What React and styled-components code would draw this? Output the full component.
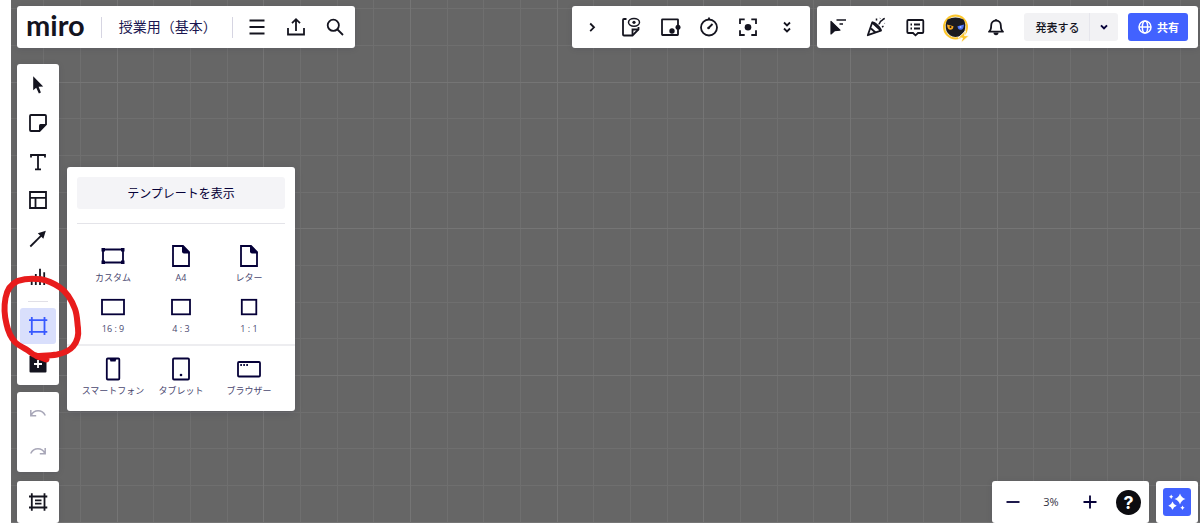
import React, { useState } from 'react'
import styled, { createGlobalStyle } from 'styled-components';

const GlobalStyle = createGlobalStyle`
  * {
    box-sizing: border-box;
  }
  body {
    margin: 0;
    background-color: #ffffff;
    font-family: "Open Sans", "Noto Sans CJK JP", sans-serif;
    color: #14141f;
  }
  button {
    font: inherit;
    color: inherit;
    border: none;
    padding: 0;
    background: none;
    cursor: pointer;
  }
`;

function Icon({ children, size = 24 }) {
  return (
    <IconSvg width={size} height={size} viewBox="0 0 24 24" aria-hidden="true">
      {children}
    </IconSvg>
  )
}

const icons = {
  menu: <path d="M4.500 5.500h15M4.500 12h15M4.500 18.500h15" />,
  upload: <path d="M4 13v6.500h16V13M12 16V4.500M8 8.200l4-4 4 4" />,
  search: <><circle cx="10.300" cy="10.300" r="5.600" /><path d="M14.500 14.500l5.500 5.500" /></>,
  next: <path d="M10.200 8.500l3.800 3.800-3.800 3.800" />,
  noteEye: (
    <>
      <path d="M7.500 4H5a1 1 0 0 0-1 1v14.500a1 1 0 0 0 1 1h8.500l6-6V12" />
      <path d="M13.500 20v-5.500h6" />
      <ellipse cx="15" cy="7.300" rx="5.500" ry="3.900" strokeWidth="1.500" />
      <circle cx="15" cy="7.300" r="1.600" fill="currentColor" stroke="none" />
    </>
  ),
  panelDots: (
    <>
      <rect x="4" y="4.300" width="16" height="15.700" rx=".5" />
      <circle cx="14" cy="16" r="2.700" fill="currentColor" stroke="none" />
      <circle cx="20" cy="12.300" r="2.500" fill="currentColor" stroke="none" />
    </>
  ),
  timer: (
    <>
      <circle cx="12" cy="12.500" r="8" />
      <path d="M12 4.500V2.500M11.500 13l4-4" />
      <circle cx="11.500" cy="13" r="1.300" fill="currentColor" stroke="none" />
    </>
  ),
  focus: (
    <>
      <path d="M4 9V4.300h4.700M15.300 4.300H20V9M20 15.300V20h-4.700M8.700 20H4v-4.700" />
      <circle cx="12" cy="12.200" r="3.300" fill="currentColor" stroke="none" />
    </>
  ),
  more: <path d="M9 7.500l3 3 3-3M9 13.500l3 3 3-3" />,
  cursorLines: (
    <>
      <path d="M6 6.500v12.500l3.500-3.300 5.500-.6z" fill="currentColor" strokeLinejoin="round" strokeWidth="1.200" />
      <path d="M11.500 5h9.500M14.500 9H18" strokeWidth="1.500" />
    </>
  ),
  party: (
    <>
      <path d="M3.800 20.200L8.200 7.500l8.700 8.200z" strokeLinejoin="round" />
      <path d="M8.200 7.500c2-.8 9 5.700 8.700 8.200M7 13.500l4.500 4" />
      <path d="M12.500 5.500V3.500M14.500 9c2 0 1-2.500 2.500-3s1.500-2 3.800-2.500M18 12l1.500-.8M16 3.500l.3-.3M20.500 8.300l.3.200" strokeWidth="1.500" />
    </>
  ),
  comments: (
    <>
      <path d="M5.300 5h14a1 1 0 0 1 1 1v11a1 1 0 0 1-1 1H15l-2.500 2.300L10 18H5.300a1 1 0 0 1-1-1V6a1 1 0 0 1 1-1z" />
      <path d="M7.500 9.500h1.500M11 9.500h6M7.500 13.500h1.500M11 13.500h6" strokeWidth="1.800" />
    </>
  ),
  bell: (
    <>
      <path d="M5 16.700c1.800-1.200 2.200-2.500 2.200-6.400a4.800 4.800 0 0 1 9.600 0c0 3.900.4 5.200 2.200 6.400z" strokeLinejoin="round" />
      <path d="M12 5.500V4.300" />
      <path d="M9.500 17.500a2.500 2.800 0 0 0 5 0z" fill="currentColor" stroke="none" />
    </>
  ),
  pointer: <path d="M7.200 3.200v14l3-2.500 2.700 5.800 2-1-2.300-5.700 4.600-.2z" fill="currentColor" stroke="none" />,
  sticky: (
    <>
      <path d="M13.500 20H5a1 1 0 0 1-1-1V5a1 1 0 0 1 1-1h14a1 1 0 0 1 1 1v8.500z" />
      <path d="M13 20.500V14.500a1.500 1.500 0 0 1 1.500-1.500h6z" fill="currentColor" stroke="none" />
    </>
  ),
  text: <path d="M5 7.500V5h14v2.500M12 5v14.500M9 19.300h6" />,
  template: <path d="M4 4h16v16H4zM4 9.800h16M9.500 9.800V20" />,
  arrow: (
    <>
      <path d="M4.300 19.500L15.500 8.300" />
      <path d="M19.800 3.800l-2.500 8-5.500-5.500z" fill="currentColor" stroke="none" />
    </>
  ),
  chart: <path d="M5.700 12.500V20M9.800 9v11M14 3.700V20M18.200 7.300V20" />,
  frame: <path d="M5.800 3v18M18.500 3v18M3 6.200h18.300M3 17.800h18.300" />,
  add: (
    <>
      <rect x="3.500" y="3.500" width="17" height="17" rx="1" fill="currentColor" stroke="none" />
      <path d="M12 8v8M8 12h8" stroke="#fff" />
    </>
  ),
  undo: <path d="M4.800 9v5.800h5.400M5.200 14.300C8 8.500 16 8.200 19.300 14.500" strokeWidth="1.500" />,
  redo: <path d="M19.200 9v5.800h-5.400M18.800 14.300C16 8.500 8 8.200 4.700 14.500" strokeWidth="1.500" />,
  frames: <path d="M5.800 3.300v17.400M18.500 3.300v17.400M3 6.500h18.300M3 17.500h18.300M9 10.300h6.500M9 13.700h6.500" />,
  minus: <path d="M5.500 12h13" />,
  plus: <path d="M5.500 12h13M12 5.500v13" />,
  custom: (
    <>
      <path d="M2 5.500h20v13H2z" />
      <path d="M.5 4h3.500v3.500H.5zM20 4h3.500v3.500H20zM.5 16.500h3.500V20H.5zM20 16.500h3.500V20H20z" fill="currentColor" stroke="none" />
    </>
  ),
  page: (
    <>
      <path d="M4 2h10l6 6v14H4z" />
      <path d="M13 2h1.500L20.500 8v1.500H15a2 2 0 0 1-2-2z" fill="currentColor" stroke="none" />
    </>
  ),
  wide: <rect x="1" y="4.800" width="22" height="14.500" />,
  standard: <rect x="3" y="4.800" width="18" height="14.500" />,
  square: <rect x="4.800" y="4.800" width="14.500" height="14.500" />,
  phone: <><rect x="5.800" y="1.500" width="12.500" height="21" rx="1" /><path d="M8.500 1.500h7l-1 3h-5z" fill="currentColor" stroke="none" /></>,
  tablet: <><rect x="4" y="1.500" width="16" height="21" rx="1" /><circle cx="12" cy="18" r="1.300" fill="currentColor" stroke="none" /></>,
  browser: <><rect x="1" y="5" width="22" height="14.500" rx="1" /><path d="M3.300 8h1.600M6.300 8h1.600M9.300 8h1.600" /></>,
};

const meetingTools = [
  { icon: "next", label: "折りたたむ" },
  { icon: "noteEye", label: "プライベートモード" },
  { icon: "panelDots", label: "アクティビティ" },
  { icon: "timer", label: "タイマー" },
  { icon: "focus", label: "フォーカス" },
  { icon: "more", label: "その他" },
];

const drawTools = [
  { icon: "pointer", label: "選択" },
  { icon: "sticky", label: "付箋" },
  { icon: "text", label: "テキスト" },
  { icon: "template", label: "テンプレート" },
  { icon: "arrow", label: "接続線" },
  { icon: "chart", label: "グラフ" },
];

const paperSizes = [
  { icon: "custom", label: "カスタム" },
  { icon: "page", label: "A4" },
  { icon: "page", label: "レター" },
  { icon: "wide", label: "16 : 9" },
  { icon: "standard", label: "4 : 3" },
  { icon: "square", label: "1 : 1" },
];

const deviceSizes = [
  { icon: "phone", label: "スマートフォン" },
  { icon: "tablet", label: "タブレット" },
  { icon: "browser", label: "ブラウザー" },
];

function SizeList({ sizes }) {
  return (
    <SizeGrid>
      {sizes.map((size) => (
        <SizeButton key={size.label} type="button">
          <Icon>{icons[size.icon]}</Icon>
          <span>{size.label}</span>
        </SizeButton>
      ))}
    </SizeGrid>
  )
}

function Avatar() {
  return (
    <svg width="30" height="32" viewBox="0 0 30 32" aria-hidden="true">
      <circle cx="15.500" cy="16" r="11.500" fill="#f6f2e6" stroke="#fcc62c" strokeWidth="2" />
      <path d="M7.500 8.500Q15.500 4.500 23.500 8.500Q26.500 13 24.500 20Q22 25.500 15.500 26Q9 25.500 6.500 20Q4.500 13 7.500 8.500z" fill="#1b1b20" />
      <path d="M7 13.500l6.500 1.800q-.3 3.500-3.200 3.500T7 13.500z" fill="#f8a81e" />
      <path d="M24 13.500l-6.500 1.800q.3 3.500 3.200 3.500T24 13.500z" fill="#4c74f5" />
      <circle cx="10.500" cy="16" r="1" fill="#1b1b20" />
      <circle cx="20.500" cy="16" r="1" fill="#a9c0ff" />
      <path d="M25.500 20l-7.500 7h4.500l-1.500 5 8-7.300h-4.500z" fill="#fcc62c" stroke="#fff" strokeWidth=".8" />
    </svg>
  )
}

export default function App() {

    const [zoom, setZoom] = useState(3);

    return (
    <>
      <GlobalStyle />
      <Board>
        <Header>
          <Panel>
            <Logo href="#">miro</Logo>
            <Divider />
            <BoardName type="button">授業用（基本）</BoardName>
            <Divider />
            <MenuButtons>
              <BarButton type="button" aria-label="メニュー"><Icon>{icons.menu}</Icon></BarButton>
              <BarButton type="button" aria-label="エクスポート"><Icon>{icons.upload}</Icon></BarButton>
              <BarButton type="button" aria-label="検索"><Icon>{icons.search}</Icon></BarButton>
            </MenuButtons>
          </Panel>
          <HeaderRight>
            <MeetingPanel>
              {meetingTools.map((tool) => (
                <BarButton key={tool.icon} type="button" aria-label={tool.label}>
                  <Icon>{icons[tool.icon]}</Icon>
                </BarButton>
              ))}
            </MeetingPanel>
            <SharePanel>
              <BarButton type="button" aria-label="カーソル"><Icon>{icons.cursorLines}</Icon></BarButton>
              <BarButton type="button" aria-label="リアクション"><Icon>{icons.party}</Icon></BarButton>
              <BarButton type="button" aria-label="コメント"><Icon>{icons.comments}</Icon></BarButton>
              <AvatarButton type="button" aria-label="プロフィール"><Avatar /></AvatarButton>
              <BarButton type="button" aria-label="通知"><Icon>{icons.bell}</Icon></BarButton>
              <Present>
                <PresentButton type="button">発表する</PresentButton>
                <PresentMore type="button" aria-label="発表オプション">
                  <Icon size={16}><path d="M7.500 9.500l4.500 4.500 4.500-4.500" strokeWidth="3" /></Icon>
                </PresentMore>
              </Present>
              <ShareButton type="button">
                <Icon size={16}>
                  <g strokeWidth="2.200">
                    <circle cx="12" cy="12" r="9" />
                    <ellipse cx="12" cy="12" rx="4" ry="9" />
                    <path d="M3 12h18" />
                  </g>
                </Icon>
                共有
              </ShareButton>
            </SharePanel>
          </HeaderRight>
        </Header>

        <Main>
          <Rail>
            <ToolPanel>
              <ToolGroup>
                {drawTools.map((tool) => (
                  <ToolButton key={tool.icon} type="button" aria-label={tool.label}>
                    <Icon>{icons[tool.icon]}</Icon>
                  </ToolButton>
                ))}
              </ToolGroup>
              <RailLine />
              <FrameTool>
                <ToolButton type="button" aria-label="フレーム" $active><Icon>{icons.frame}</Icon></ToolButton>
                <Scribble width="84" height="92" viewBox="0 0 84 92" aria-hidden="true">
                  <path d="M36 83.500C33 83 31 80.500 28 78.500C22 75 18 73 15 70C11 65.500 8 59 6.500 52C4.500 44 4 34 5.500 26C7 17.500 11 12 18 8.800C25 6.500 34 6.300 41 7.300C48 8.500 54 11.500 60 15.500C68 21 72 29 75 37C77.500 44 77 50 78 56C79 64 77 70 73 74.500C69 79.500 64 81 57 82.500C51 83.500 46 83.500 36.500 84C40 85 44 87 46.500 87.500" />
                </Scribble>
              </FrameTool>
              <ToolButton type="button" aria-label="追加"><Icon>{icons.add}</Icon></ToolButton>
            </ToolPanel>
            <ToolPanel>
              <ToolButton type="button" aria-label="元に戻す" $muted><Icon>{icons.undo}</Icon></ToolButton>
              <ToolButton type="button" aria-label="やり直す" $muted><Icon>{icons.redo}</Icon></ToolButton>
            </ToolPanel>
            <FramesPanel>
              <ToolButton type="button" aria-label="フレーム一覧"><Icon>{icons.frames}</Icon></ToolButton>
            </FramesPanel>
          </Rail>

          <FrameMenu>
            <TemplateButton type="button">テンプレートを表示</TemplateButton>
            <MenuLine />
            <SizeList sizes={paperSizes} />
            <SectionLine />
            <SizeList sizes={deviceSizes} />
          </FrameMenu>

          <Footer>
            <ZoomPanel>
              <BarButton type="button" aria-label="縮小" $navy onClick={() => setZoom(Math.max(1, zoom - 1))}>
                <Icon>{icons.minus}</Icon>
              </BarButton>
              <ZoomLevel>{zoom}%</ZoomLevel>
              <BarButton type="button" aria-label="拡大" $navy onClick={() => setZoom(zoom + 1)}>
                <Icon>{icons.plus}</Icon>
              </BarButton>
              <BarButton type="button" aria-label="ヘルプ"><HelpMark>?</HelpMark></BarButton>
            </ZoomPanel>
            <Panel>
              <SparkleButton type="button" aria-label="AI アシスト">
                <svg width="20" height="20" viewBox="0 0 20 20" fill="#fff" aria-hidden="true">
                  <path d="M13 1.500Q14.300 5.700 18.500 7Q14.300 8.300 13 12.500Q11.700 8.300 7.500 7Q11.700 5.700 13 1.500z" />
                  <path d="M5.500 9.500Q6.500 12.800 9.700 13.800Q6.500 14.800 5.500 18Q4.500 14.800 1.300 13.800Q4.500 12.800 5.500 9.500z" />
                  <path d="M4.200 2.500Q4.700 4.200 6.300 4.700Q4.700 5.200 4.200 7Q3.700 5.200 2 4.700Q3.700 4.200 4.200 2.500zM15.500 13.500Q16 15.300 17.700 15.800Q16 16.300 15.500 18Q15 16.300 13.300 15.800Q15 15.300 15.500 13.500z" />
                </svg>
              </SparkleButton>
            </Panel>
          </Footer>
        </Main>
      </Board>
    </>
  )
};

const IconSvg = styled.svg`
  display: block;
  flex: none;
  fill: none;
  stroke: currentColor;
  stroke-width: 1.8;
`;

// grid: a thin line about every 37px, every fourth one brighter
const Board = styled.div`
  display: flex;
  flex-direction: column;
  gap: 16px;
  min-height: 100vh;
  margin-left: 11px;
  padding: 6px 2px 0 6px;
  background-color: #666666;
  background-image:
    linear-gradient(to right, transparent 106px, #757575 106px 107px, transparent 107px 252px, #757575 252px 253px, transparent 253px 399px, #757575 399px 400px, transparent 400px),
    linear-gradient(to bottom, transparent 82px, #757575 82px 83px, transparent 83px 228px, #757575 228px 229px, transparent 229px 375px, #757575 375px 376px, transparent 376px),
    linear-gradient(to right, transparent 32px, #6f6f6f 32px 33px, transparent 33px 69px, #6f6f6f 69px 70px, transparent 70px 106px, #6f6f6f 106px 107px, transparent 107px),
    linear-gradient(to bottom, transparent 8px, #6f6f6f 8px 9px, transparent 9px 45px, #6f6f6f 45px 46px, transparent 46px 82px, #6f6f6f 82px 83px, transparent 83px);
  background-size: 440px 440px, 440px 440px, 110px 110px, 110px 110px;
`;

const Header = styled.header`
  display: flex;
  justify-content: space-between;
`;

const HeaderRight = styled.div`
  display: flex;
  gap: 7px;
`;

const Panel = styled.div`
  display: flex;
  align-items: center;
  height: 42px;
  background-color: #ffffff;
  border-radius: 3px;
  box-shadow: 0 1px 6px rgba(5, 0, 56, 0.1);
`;

const MeetingPanel = styled(Panel)`
  width: 238px;
  padding: 0 4px 0 1px;
`;

const SharePanel = styled(Panel)`
  padding-right: 10px;
`;

const ZoomPanel = styled(Panel)`
  padding: 0 1px;
`;

const Logo = styled.a`
  padding: 0 16px 4px 9px;
  font-family: Lato, sans-serif;
  font-size: 29px;
  font-weight: 700;
  line-height: 36px;
  color: #14141f;
  text-decoration: none;
`;

const Divider = styled.span`
  width: 1px;
  height: 21px;
  background-color: #d6d5e2;
`;

const BoardName = styled.button`
  padding: 0 15px 0 17px;
  font-size: 14px;
  line-height: 20px;
  color: #1a1650;
`;

const MenuButtons = styled.div`
  display: flex;
  padding-left: 5px;
`;

const BarButton = styled.button`
  display: flex;
  align-items: center;
  justify-content: center;
  width: 39px;
  height: 42px;
  color: ${({ $navy }) => ($navy ? "#050038" : "#14141f")};
`;

const AvatarButton = styled(BarButton)`
  width: 42px;
`;

const Present = styled.div`
  display: flex;
  height: 28px;
  width: 94px;
  margin: 0 10px 0 9px;
  background-color: #f2f2f4;
  border-radius: 3px;
`;

const PresentButton = styled.button`
  flex: 1;
  padding-left: 2px;
  font-size: 11px;
  font-weight: 500;
`;

const PresentMore = styled.button`
  display: flex;
  align-items: center;
  justify-content: center;
  width: 29px;
  color: #050038;
  border-left: 1px solid #e6e6ec;
`;

const ShareButton = styled.button`
  display: flex;
  align-items: center;
  justify-content: center;
  gap: 4px;
  width: 60px;
  height: 28px;
  font-size: 11px;
  font-weight: 700;
  color: #ffffff;
  background-color: #4262ff;
  border-radius: 3px;
`;

const Main = styled.main`
  display: flex;
  flex: 1;
  gap: 8px;
`;

const Rail = styled.nav`
  display: flex;
  flex-direction: column;
  gap: 7px;
  width: 42px;
`;

const ToolPanel = styled.div`
  display: flex;
  flex-direction: column;
  align-items: center;
  gap: 2px;
  padding: 3px;
  background-color: #ffffff;
  border-radius: 3px;
  box-shadow: 0 1px 6px rgba(5, 0, 56, 0.1);
`;

const FramesPanel = styled(ToolPanel)`
  margin-top: auto;
`;

const ToolGroup = styled.div`
  display: flex;
  flex-direction: column;
  justify-content: space-between;
  height: 228px;
`;

const ToolButton = styled.button`
  display: flex;
  align-items: center;
  justify-content: center;
  width: 36px;
  height: 36px;
  border-radius: 3px;
  color: ${({ $active, $muted }) => ($active ? "#3859ff" : $muted ? "#a8a7b8" : "#14141f")};
  background-color: ${({ $active }) => ($active ? "#d9dffc" : "transparent")};
`;

const RailLine = styled.span`
  width: 20px;
  height: 1px;
  margin: 4px 0;
  background-color: #e1e0e7;
`;

const FrameTool = styled.div`
  position: relative;
`;

// hand drawn ring over the frame tool
const Scribble = styled.svg`
  position: absolute;
  left: -20px;
  top: -36px;
  z-index: 2;
  pointer-events: none;
  fill: none;
  stroke: #e81c1c;
  stroke-width: 6;
  stroke-linecap: round;
  stroke-linejoin: round;
`;

const FrameMenu = styled.section`
  align-self: flex-start;
  width: 228px;
  margin-top: 103px;
  padding: 10px 10px 15px;
  background-color: #ffffff;
  border-radius: 3px;
  box-shadow: 0 2px 8px rgba(5, 0, 56, 0.12);
`;

const TemplateButton = styled.button`
  display: block;
  width: 100%;
  height: 32px;
  font-size: 12px;
  color: #050038;
  background-color: #f4f4f7;
  border-radius: 3px;
`;

const MenuLine = styled.div`
  height: 1px;
  margin: 14px 0 20px;
  background-color: #e4e4e9;
`;

const SectionLine = styled.div`
  height: 2px;
  margin: 10px -10px 11px;
  background-color: #ededf0;
`;

const SizeGrid = styled.div`
  display: grid;
  grid-template-columns: repeat(3, 1fr);
  row-gap: 12px;
  padding: 0 2px;
`;

const SizeButton = styled.button`
  display: flex;
  flex-direction: column;
  align-items: center;
  gap: 4px;
  font-size: 9px;
  line-height: 11px;
  white-space: nowrap;
  color: #050038;
  span {
    color: #4a4870;
  }
`;

const Footer = styled.footer`
  display: flex;
  align-self: flex-end;
  gap: 7px;
  margin-left: auto;
`;

const ZoomLevel = styled.span`
  width: 38px;
  font-size: 11px;
  line-height: 14px;
  text-align: center;
  color: #33323f;
`;

const HelpMark = styled.span`
  width: 25px;
  height: 25px;
  border-radius: 50%;
  background-color: #0c0c10;
  color: #ffffff;
  font-family: Inter, sans-serif;
  font-size: 18px;
  font-weight: 700;
  line-height: 25px;
  text-align: center;
`;

const SparkleButton = styled.button`
  display: flex;
  align-items: center;
  justify-content: center;
  width: 28px;
  height: 28px;
  margin: 0 7px;
  background-color: #4262ff;
  border-radius: 3px;
`;
